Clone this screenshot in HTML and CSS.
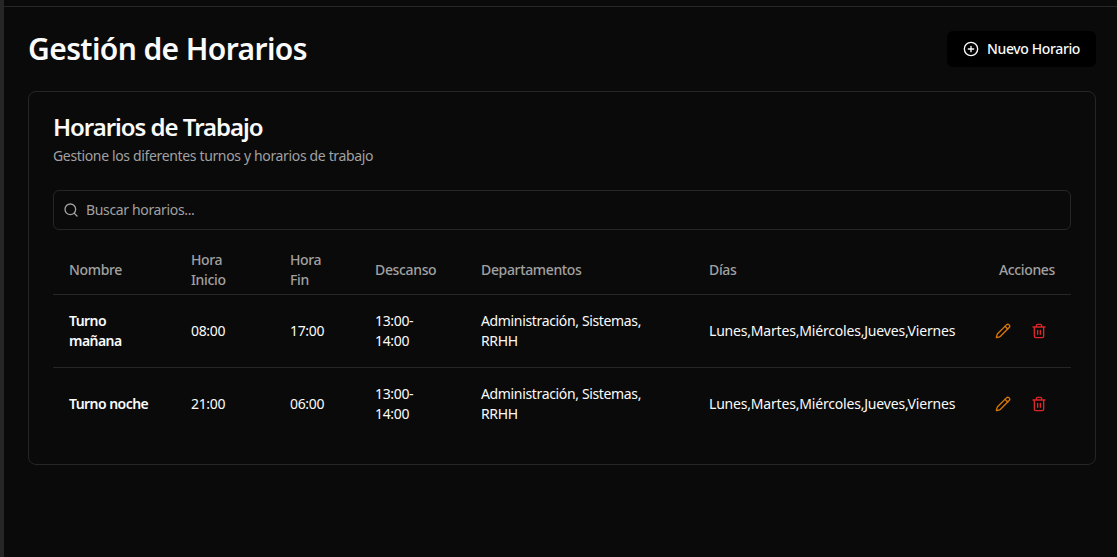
FILE: index.html
```html
<!DOCTYPE html>
<html lang="es">
<head>
<meta charset="utf-8">
<title>Gestión de Horarios</title>
<link rel="stylesheet" href="styles.css">
</head>
<body>
<div class="shell">
  <div class="rail"></div>
  <div class="content">
    <div class="topbar"></div>
    <main class="main">
      <header class="page-head">
        <h1>Gestión de Horarios</h1>
        <button class="primary" type="button">
          <svg class="icon" viewBox="0 0 24 24"><circle cx="12" cy="12" r="10"/><path d="M8 12h8M12 8v8"/></svg>
          Nuevo Horario
        </button>
      </header>
      <section class="card">
        <h2>Horarios de Trabajo</h2>
        <p class="sub">Gestione los diferentes turnos y horarios de trabajo</p>
        <label class="search">
          <svg class="icon search-icon" viewBox="0 0 24 24"><circle cx="11" cy="11" r="8"/><path d="m21 21-4.3-4.3"/></svg>
          <span>Buscar horarios...</span>
        </label>
        <table>
          <colgroup>
            <col class="c-name"><col class="c-start"><col class="c-end"><col class="c-break"><col class="c-dep"><col class="c-days"><col class="c-act">
          </colgroup>
          <thead>
            <tr><th>Nombre</th><th>Hora<br>Inicio</th><th>Hora<br>Fin</th><th>Descanso</th><th>Departamentos</th><th>Días</th><th class="right">Acciones</th></tr>
          </thead>
          <tbody>
            <tr>
              <td class="name">Turno<br>mañana</td><td>08:00</td><td>17:00</td><td>13:00-<br>14:00</td><td>Administración, Sistemas,<br>RRHH</td><td class="days">Lunes,Martes,Miércoles,Jueves,Viernes</td>
              <td><div class="actions">
                <svg class="icon edit" viewBox="0 0 24 24"><path d="M21.17 6.81a2.82 2.82 0 0 0-3.99-3.99L3.84 16.17a2 2 0 0 0-.5.83l-1.32 4.35a.5.5 0 0 0 .62.62L7 20.65a2 2 0 0 0 .83-.5z"/><path d="m15 5 4 4"/></svg>
                <svg class="icon del" viewBox="0 0 24 24"><path d="M3 6h18M19 6v14a2 2 0 0 1-2 2H7a2 2 0 0 1-2-2V6M8 6V4a2 2 0 0 1 2-2h4a2 2 0 0 1 2 2v2M10 11v6M14 11v6"/></svg>
              </div></td>
            </tr>
            <tr>
              <td class="name">Turno noche</td><td>21:00</td><td>06:00</td><td>13:00-<br>14:00</td><td>Administración, Sistemas,<br>RRHH</td><td class="days">Lunes,Martes,Miércoles,Jueves,Viernes</td>
              <td><div class="actions">
                <svg class="icon edit" viewBox="0 0 24 24"><path d="M21.17 6.81a2.82 2.82 0 0 0-3.99-3.99L3.84 16.17a2 2 0 0 0-.5.83l-1.32 4.35a.5.5 0 0 0 .62.62L7 20.65a2 2 0 0 0 .83-.5z"/><path d="m15 5 4 4"/></svg>
                <svg class="icon del" viewBox="0 0 24 24"><path d="M3 6h18M19 6v14a2 2 0 0 1-2 2H7a2 2 0 0 1-2-2V6M8 6V4a2 2 0 0 1 2-2h4a2 2 0 0 1 2 2v2M10 11v6M14 11v6"/></svg>
              </div></td>
            </tr>
          </tbody>
        </table>
      </section>
    </main>
  </div>
</div>
</body>
</html>
```

FILE: styles.css
```css
* { box-sizing: border-box; }
html, body { margin: 0; height: 100%; }
body {
  background: #0a0a0a;
  color: #fafafa;
  font-family: "Noto Sans", "Open Sans", sans-serif;
  font-size: 14px;
  line-height: 20px;
  letter-spacing: -0.35px;
  overflow: hidden;
}
.shell { display: flex; height: 557px; }
.rail { width: 4px; background: #262626; flex: none; }
.content { flex: 1; min-width: 0; }
.topbar { height: 7px; border-bottom: 1px solid #262626; }
.main { padding: 24px 21px 24px 24px; }
.page-head { display: flex; justify-content: space-between; align-items: center; height: 36px; margin-bottom: 24px; }
h1 { margin: 0; font-size: 30px; line-height: 36px; font-weight: 600; letter-spacing: -0.6px; }
.primary {
  display: flex; align-items: center; gap: 8px;
  height: 36px; padding: 0 16px;
  background: #000; color: #fafafa;
  border: 0; border-radius: 6px;
  font: 500 14px/20px "Noto Sans", sans-serif;
  letter-spacing: -0.38px;
}
.icon { width: 16px; height: 16px; fill: none; stroke: currentColor; stroke-width: 2; stroke-linecap: round; stroke-linejoin: round; flex: none; }
.card { border: 1px solid #262626; border-radius: 8px; padding: 23px 24px 24px; height: 374px; }
h2 { margin: 0; font-size: 24px; line-height: 24px; font-weight: 600; letter-spacing: -1.05px; }
.sub { margin: 7px 0 0; font-size: 14px; line-height: 20px; color: #a1a1a1; }
.search {
  display: flex; align-items: center; gap: 7px;
  height: 40px; margin-top: 24px; padding: 0 12px 0 9px;
  border: 1px solid #262626; border-radius: 6px;
  color: #a1a1a1;
}
table { width: 100%; border-collapse: collapse; table-layout: fixed; margin-top: 16px; }
.c-name { width: 122px; }
.c-start { width: 99px; }
.c-end { width: 85px; }
.c-break { width: 106px; }
.c-dep { width: 228px; }
.c-days { width: 273px; }
th, td { padding: 16px; text-align: left; vertical-align: middle; }
th { height: 48px; padding: 4px 16px; font-weight: 500; color: #a1a1a1; border-bottom: 1px solid #262626; }
td { height: 73px; }
tbody tr:first-child td { border-bottom: 1px solid #262626; }
.right { text-align: right; }
.name { font-weight: 600; letter-spacing: -0.55px; }
.days { letter-spacing: -0.19px; }
.actions { display: flex; justify-content: flex-end; gap: 20px; padding-right: 8px; }
.edit { color: #d97706; }
.del { color: #dc2626; }
```
